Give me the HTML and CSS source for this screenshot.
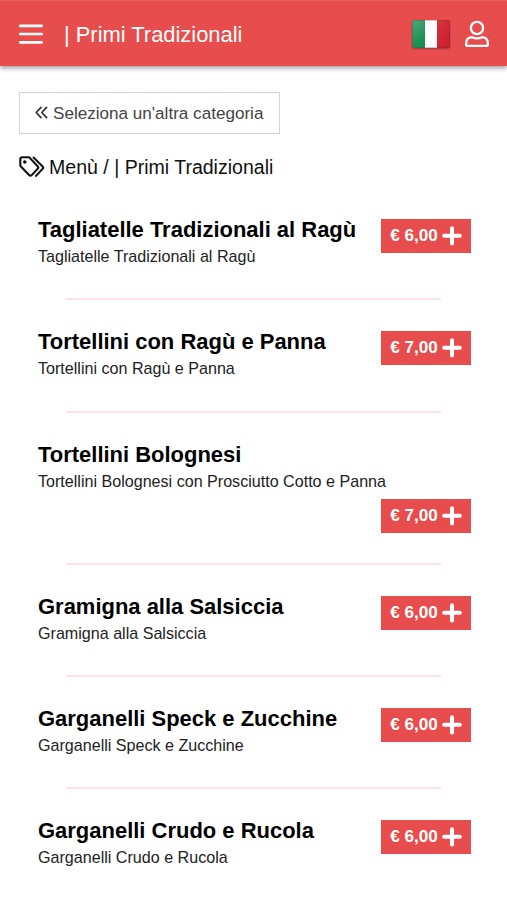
FILE: index.html
```html
<!DOCTYPE html>
<html lang="it">
<head>
<meta charset="utf-8">
<title>Primi Tradizionali</title>
<link rel="stylesheet" href="styles.css">
</head>
<body>
<svg width="0" height="0" class="defs">
  <symbol id="plus" viewBox="0 0 20 20"><path d="M10 2.200v15.200M2.200 9.800h15.600" fill="none" stroke="#fff" stroke-width="4" stroke-linecap="round"/></symbol>
</svg>
<header class="topbar">
  <svg class="burger" viewBox="0 0 24 22"><path d="M1.200 2.800h21.600M1.200 11h21.600M1.200 19.300h21.600" fill="none" stroke="#fff" stroke-width="2.700" stroke-linecap="round"/></svg>
  <h1 class="heading">| Primi Tradizionali</h1>
  <svg class="flag" viewBox="0 0 38 28">
    <defs><linearGradient id="shine" x1="0" y1="0" x2="1" y2="1"><stop offset="0" stop-color="#fff" stop-opacity=".25"/><stop offset=".5" stop-color="#fff" stop-opacity=".04"/><stop offset="1" stop-color="#000" stop-opacity=".05"/></linearGradient></defs>
    <path d="M0 0h13v28H0z" fill="#128a4b"/><path d="M13 0h12v28H13z" fill="#fff"/><path d="M25 0h13v28H25z" fill="#d5202e"/>
    <path d="M0 0h38v28H0z" fill="url(#shine)"/><path d="M.5.5h37v27H.5z" fill="none" stroke="#40332c" stroke-opacity=".25"/>
  </svg>
  <svg class="user" viewBox="0 0 26 28"><g fill="none" stroke="#fff" stroke-width="2.300" stroke-linejoin="round"><circle cx="13" cy="8" r="6.100"/><path d="M8 17.200C4.300 17.500 2.200 19.900 2.200 23v1.400q0 1.500 1.500 1.500h18.600q1.500 0 1.500-1.500V23c0-3.100-2.100-5.500-5.800-5.800-1.700.9-3.300 1.200-5 1.200s-3.300-.3-5-1.200z"/></g></svg>
</header>
<main>
  <a class="back"><svg class="chevrons" viewBox="0 0 13 13"><path d="M6 1.300L1.200 6.500 6 11.700M11.600 1.300L6.800 6.500l4.800 5.200" fill="none" stroke="#333" stroke-width="1.700" stroke-linecap="round" stroke-linejoin="round"/></svg><span>Seleziona un'altra categoria</span></a>
  <div class="crumbs"><svg class="tags" viewBox="0 0 26 22"><g fill="none" stroke="#111" stroke-width="2.100" stroke-linecap="round" stroke-linejoin="round"><path d="M1.300 3.200v6q0 .8.600 1.400l8.200 8.500q1.300 1.300 2.600 0l5.900-6.200q1.300-1.300 0-2.600L10.800 1.900q-.6-.6-1.400-.6H3.100q-1.800 0-1.800 1.900z"/><path d="M14.600 1.500l9 9q1.200 1.200 0 2.400l-6.600 7"/></g><circle cx="5.800" cy="6" r="1.800" fill="#111"/></svg><span>Menù / | Primi Tradizionali</span></div>
  <section class="menu">
    <article class="dish"><div class="info"><h2>Tagliatelle Tradizionali al Ragù</h2><p>Tagliatelle Tradizionali al Ragù</p></div><button class="price"><span>€ 6,00</span><svg><use href="#plus"/></svg></button></article>
    <article class="dish"><div class="info"><h2>Tortellini con Ragù e Panna</h2><p>Tortellini con Ragù e Panna</p></div><button class="price"><span>€ 7,00</span><svg><use href="#plus"/></svg></button></article>
    <article class="dish wide"><div class="info"><h2>Tortellini Bolognesi</h2><p>Tortellini Bolognesi con Prosciutto Cotto e Panna</p></div><button class="price"><span>€ 7,00</span><svg><use href="#plus"/></svg></button></article>
    <article class="dish"><div class="info"><h2>Gramigna alla Salsiccia</h2><p>Gramigna alla Salsiccia</p></div><button class="price"><span>€ 6,00</span><svg><use href="#plus"/></svg></button></article>
    <article class="dish"><div class="info"><h2>Garganelli Speck e Zucchine</h2><p>Garganelli Speck e Zucchine</p></div><button class="price"><span>€ 6,00</span><svg><use href="#plus"/></svg></button></article>
    <article class="dish"><div class="info"><h2>Garganelli Crudo e Rucola</h2><p>Garganelli Crudo e Rucola</p></div><button class="price"><span>€ 6,00</span><svg><use href="#plus"/></svg></button></article>
  </section>
</main>
</body>
</html>
```
FILE: styles.css
```css
* { box-sizing: border-box; margin: 0; }
html { height: 900px; overflow: hidden; }
body { height: 900px; overflow: hidden; background: #fff; color: #111; font-family: "Liberation Sans", Arial, sans-serif; }
svg { display: block; flex: none; }
.defs { display: none; }
.topbar { display: flex; align-items: center; height: 66px; padding: 0 17px 0 19px; background: #e84d4d; border-top: 1px solid #e46360; box-shadow: 0 2px 5px rgba(0, 0, 0, .4); }
.burger { width: 24px; height: 22px; }
.heading { flex: 1; margin-left: 21px; padding-top: 2px; color: #fff; font-size: 21.900px; font-weight: 400; white-space: nowrap; }
.flag { width: 38px; height: 28px; margin-right: 14px; border-radius: 2px; box-shadow: 0 1px 2px rgba(0, 0, 0, .3); }
.user { width: 26px; height: 28px; }
main { padding: 26px 19px 0; }
.back { display: flex; align-items: center; width: 261px; height: 42px; padding-left: 15px; gap: 5px; border: 1px solid #d2d2d2; color: #444; font-size: 17.1px; white-space: nowrap; }
.back span { padding-top: 2px; }
.chevrons { width: 13px; height: 13px; margin-top: -2px; }
.crumbs { display: flex; align-items: center; height: 24px; margin-top: 21px; gap: 4px; font-size: 19.55px; white-space: nowrap; }
.tags { width: 26px; height: 22px; }
.menu { padding: 38px 17px 0 19px; }
.dish { display: flex; justify-content: space-between; align-items: flex-start; height: 112.2px; position: relative; }
.dish:first-child { height: 112.4px; }
.dish::after { content: ""; position: absolute; left: 28px; right: 30px; top: 81.2px; height: 2px; background: #fbe3e3; }
.dish:last-child::after { display: none; }
.wide { flex-direction: column; height: 152.2px; justify-content: flex-start; }
.wide::after { top: 121.500px; }
.wide .price { align-self: flex-end; margin-top: 7.500px; }
.info { white-space: nowrap; }
h2 { color: #000; font-size: 21.98px; line-height: 26px; font-weight: 700; }
.info p { font-size: 16.1px; line-height: 22px; margin-top: 2px; color: #222; }
.price { display: flex; align-items: center; justify-content: center; width: 90px; height: 34px; margin-top: 2px; padding: 0; gap: 4px; border: 0; background: #e84d4d; color: #fff; font: 700 17.1px "Liberation Sans", Arial, sans-serif; }
.price svg { width: 20px; height: 20px; }
```
